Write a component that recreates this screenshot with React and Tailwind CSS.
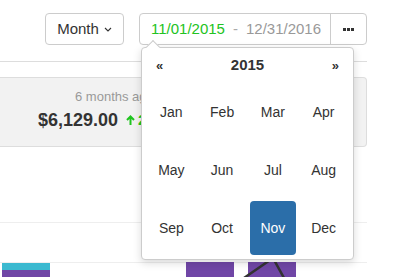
import React from 'react';

const months = ['Jan', 'Feb', 'Mar', 'Apr', 'May', 'Jun', 'Jul', 'Aug', 'Sep', 'Oct', 'Nov', 'Dec'];

const App = () => {
    return (
        <div className="relative w-[393px] h-[277px] overflow-hidden bg-white font-['Liberation_Sans',Arial,sans-serif] text-[#333]">
            <div className="pr-[26px]">
                {/* Toolbar */}
                <div className="flex justify-end items-center gap-[15px] pt-[13px] h-[61px] items-start">
                    <button className="flex items-center gap-[5px] h-[32px] w-[79px] justify-center border border-[#ccc] rounded-[4px] text-[15px]">
                        <span>Month</span>
                        <svg width="8" height="5" viewBox="0 0 8 5" fill="none" stroke="#333" strokeWidth="1.1">
                            <path d="M1 1l3 3 3-3" />
                        </svg>
                    </button>
                    <div className="flex h-[32px] w-[228px] border border-[#ccc] rounded-[4px] text-[15px]">
                        <div className="flex items-center flex-1 pl-[11px]">
                            <span className="text-[#22c322]">11/01/2015</span>
                            <span className="text-[#aaa] mx-[8px]">-</span>
                            <span className="text-[#999]">12/31/2016</span>
                        </div>
                        <button className="w-[36px] border-l border-[#ccc] flex items-center justify-center gap-[1px]">
                            <span className="w-[3px] h-[3px] bg-[#333]" />
                            <span className="w-[3px] h-[3px] bg-[#333]" />
                            <span className="w-[3px] h-[3px] bg-[#333]" />
                        </button>
                    </div>
                </div>

                <div className="border-t border-[#ddd]" />

                {/* Stats */}
                <div className="mt-[15px] h-[70px] bg-[#f2f2f2] border border-l-0 border-[#ddd] rounded-r-[4px] pl-[38px] pt-[11px]">
                    <div className="pl-[37px] text-[13px] text-[#999] leading-[16px]">6 months ago</div>
                    <div className="flex items-center mt-[4px] leading-[22px]">
                        <span className="text-[18px] font-bold text-[#333]">$6,129.00</span>
                        <svg className="ml-[8px]" width="9" height="10" viewBox="0 0 9 10" fill="none" stroke="#1fc41f" strokeWidth="2">
                            <path d="M4.5 10V2M1 5l3.5-3.5L8 5" />
                        </svg>
                        <span className="ml-[3px] text-[15px] font-bold text-[#1fc41f]">23.4%</span>
                    </div>
                </div>

                <div className="h-[75px]" />
                <div className="border-t border-[#eee]" />
                <div className="h-[39px]" />
                <div className="border-t border-[#eee]" />
            </div>

            {/* Chart bars */}
            <svg className="absolute left-0 top-[262px]" width="393" height="15">
                <rect x="2" y="1" width="48" height="7" fill="#3bb9d0" />
                <rect x="2" y="8" width="48" height="7" fill="#7046a6" />
                <rect x="186" y="0" width="48" height="15" fill="#7046a6" />
                <rect x="248" y="0" width="48" height="15" fill="#7046a6" />
                <path d="M244 16L273 -4L284 16" stroke="#333" strokeWidth="2.5" fill="none" />
            </svg>

            {/* Month picker popup */}
            <div className="absolute left-[141px] top-[47px] w-[213px] h-[213px] bg-white border border-[#ccc] rounded-[4px] shadow-[0_3px_8px_rgba(0,0,0,0.15)]">
                <div className="absolute -top-[6px] left-[6px] w-[10px] h-[10px] bg-white border-l border-t border-[#ccc] rotate-45" />
                <div className="flex items-center justify-between h-[35px] px-[14px] text-[14px]">
                    <span className="text-[13px] font-bold">«</span>
                    <span className="font-bold text-[15px]">2015</span>
                    <span className="text-[13px] font-bold">»</span>
                </div>
                <div className="grid grid-cols-4 px-[4px]">
                    {months.map((m) => (
                        <div key={m} className="h-[58px] p-[2px]">
                            <div
                                className={
                                    m === 'Nov'
                                        ? 'h-full flex items-center justify-center rounded-[4px] bg-[#2b6ea9] text-white text-[14px]'
                                        : 'h-full flex items-center justify-center text-[14px] text-[#333]'
                                }
                            >
                                {m}
                            </div>
                        </div>
                    ))}
                </div>
            </div>
        </div>
    );
};

export default App;
